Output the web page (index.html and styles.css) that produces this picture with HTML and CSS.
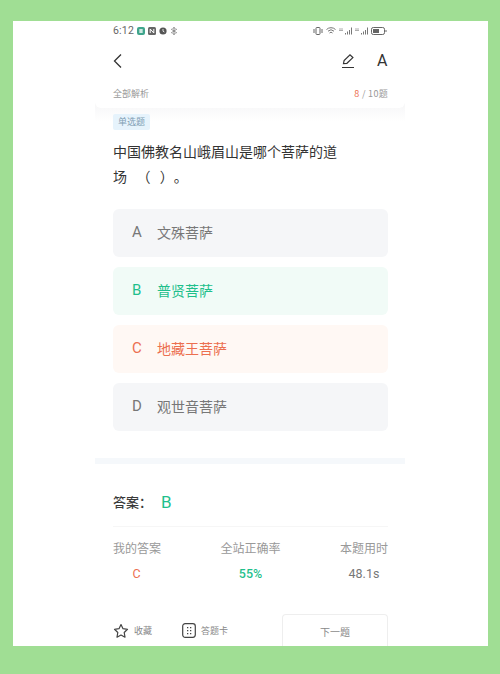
FILE: index.html
```html
<!DOCTYPE html>
<html lang="zh-CN">
<head>
<meta charset="utf-8">
<title>全部解析</title>
<link rel="stylesheet" href="styles.css">
</head>
<body>
<main class="sheet">
  <div class="phone">
    <header class="top-card">
      <div class="status">
        <div class="status-left">
          <span class="time">6:12</span>
          <svg viewBox="0 0 8 8" width="8" height="8"><rect width="8" height="8" rx="2" fill="#3fa58c"/><path d="M2 3h4M2 5h4M4 2v4" stroke="#fff" stroke-width="1"/></svg>
          <svg viewBox="0 0 8 8" width="8" height="8"><rect width="8" height="8" rx="1.5" fill="#666"/><path d="M2.200 6V2l3.600 4V2" stroke="#fff" stroke-width="1" fill="none"/></svg>
          <svg viewBox="0 0 8 8" width="8" height="8"><circle cx="4" cy="4" r="3.600" fill="#555"/><path d="M4 2v2.200l1.400 .8" stroke="#fff" stroke-width=".8" fill="none"/></svg>
          <svg viewBox="0 0 8 8" width="8" height="8"><path d="M1 2l6 4M1 6l6-4M4 .5v7M2.500 1.500L4 .5l1.500 1M2.500 6.500L4 7.500l1.500-1" stroke="#777" stroke-width=".8" fill="none"/></svg>
        </div>
        <div class="status-right">
          <svg viewBox="0 0 10 8" width="10" height="8"><rect x="3" y=".5" width="4" height="7" rx=".8" fill="none" stroke="#666"/><path d="M1 2v4M9 2v4" stroke="#666"/></svg>
          <svg viewBox="0 0 10 8" width="10" height="8"><path d="M.5 2.500a6.500 6.500 0 0 1 9 0M2 4.200a4.300 4.300 0 0 1 6 0M3.500 6a2 2 0 0 1 3 0" stroke="#777" fill="none"/></svg>
          <svg viewBox="0 0 13 8" width="13" height="8"><path d="M6 7.500h1V6H6zM8 7.500h1V4.500H8zM10 7.500h1V3h-1zM12 7.500h1V.5h-1z" fill="#777"/><path d="M0 2h4M0 3.500h4" stroke="#999" stroke-width=".8"/></svg>
          <svg viewBox="0 0 13 8" width="13" height="8"><path d="M6 7.500h1V6H6zM8 7.500h1V4.500H8zM10 7.500h1V3h-1zM12 7.500h1V.5h-1z" fill="#777"/><path d="M0 2h4M0 3.500h4" stroke="#999" stroke-width=".8"/></svg>
          <svg viewBox="0 0 16 8" width="16" height="8"><rect x=".5" y=".5" width="13" height="7" rx="1.800" fill="none" stroke="#666"/><rect x="2" y="2" width="6" height="4" fill="#666"/><path d="M15 3v2" stroke="#666"/></svg>
        </div>
      </div>
      <nav class="toolbar">
        <svg viewBox="0 0 10 16" width="10" height="16"><path d="M8 1.500L1.500 8 8 14.500" fill="none" stroke="#333" stroke-width="1.300"/></svg>
        <div class="tools">
          <svg viewBox="0 0 14 16" width="14" height="16"><path d="M2.500 10.500l.6-3L9 1.800l2.900 2.800-6 5.700zM1 14.500h12" fill="none" stroke="#333" stroke-width="1.200"/></svg>
          <span class="font-a">A</span>
        </div>
      </nav>
      <div class="progress">
        <span>全部解析</span>
        <span class="count"><b class="current">8</b> / 10题</span>
      </div>
    </header>

    <section class="question">
      <span class="tag">单选题</span>
      <h1 class="stem">中国佛教名山峨眉山是哪个菩萨的道场&nbsp;&nbsp;&nbsp;（&nbsp;&nbsp;&nbsp;）。</h1>
      <ul class="options">
        <li class="option"><span class="letter">A</span>文殊菩萨</li>
        <li class="option right"><span class="letter">B</span>普贤菩萨</li>
        <li class="option wrong"><span class="letter">C</span>地藏王菩萨</li>
        <li class="option"><span class="letter">D</span>观世音菩萨</li>
      </ul>
    </section>

    <div class="divider"></div>

    <section class="answer">
      <div class="answer-line">答案：<span class="answer-key">B</span></div>
      <div class="stats">
        <div class="stat"><span class="stat-label">我的答案</span><span class="stat-value bad">C</span></div>
        <div class="stat"><span class="stat-label">全站正确率</span><span class="stat-value good">55%</span></div>
        <div class="stat"><span class="stat-label">本题用时</span><span class="stat-value">48.1s</span></div>
      </div>
    </section>

    <footer class="bottom">
      <div class="action">
        <svg viewBox="0 0 16 16" width="16" height="16"><path d="M8 1.500l2 4.200 4.500.6-3.300 3.200.8 4.700L8 12l-4 2.200.8-4.700L1.500 6.300 6 5.700z" fill="none" stroke="#444" stroke-width="1.200" stroke-linejoin="round"/></svg>
        <span>收藏</span>
      </div>
      <div class="action action-card">
        <svg viewBox="0 0 14 15" width="14" height="15"><rect x=".7" y=".7" width="12.600" height="13.600" rx="2.500" fill="none" stroke="#444" stroke-width="1.200"/><path d="M5 4h1.300v1.300H5zM8 4h1.300v1.300H8zM5 7h1.300v1.300H5zM8 7h1.300v1.300H8zM8 10h1.300v1.300H8zM5 10h1.300v1.300H5z" fill="#444"/></svg>
        <span>答题卡</span>
      </div>
      <div class="next">下一题</div>
    </footer>
  </div>
</main>
</body>
</html>
```

FILE: styles.css
```css
* { box-sizing: border-box; }
html, body { margin: 0; padding: 0; }
body {
  width: 500px;
  height: 674px;
  overflow: hidden;
  background: #a0de94;
  font-family: "Noto Sans CJK SC", "Noto Sans", sans-serif;
  padding: 21px 12px 28px 13px;
}
.sheet {
  height: 625px;
  background: #fff;
  overflow: hidden;
}
.phone {
  width: 310px;
  margin-left: 82px;
}
.top-card {
  height: 87px;
  padding: 0 17px 0 18px;
  border-radius: 0 0 6px 6px;
  background: #fff;
  position: relative;
}
.status {
  height: 19px;
  display: flex;
  justify-content: space-between;
  align-items: center;
}
.status-left, .status-right { display: flex; align-items: center; gap: 3px; }
.status-right { margin-right: 1px; }
.time { font: 10.500px "Roboto", sans-serif; color: #666; letter-spacing: .2px; }
.toolbar {
  height: 27px;
  margin-top: 7px;
  display: flex;
  justify-content: space-between;
  align-items: center;
}
.tools { display: flex; align-items: center; gap: 22px; }
.font-a { font: 16px "Roboto", sans-serif; color: #333; width: 11px; }
.progress {
  margin-top: 13px;
  display: flex;
  justify-content: space-between;
  font-size: 9px;
  line-height: 13px;
  color: #999;
}
.count { letter-spacing: .3px; }
.current { color: #ec6f50; font-weight: 400; }

.question {
  margin-top: -6px;
  padding: 12px 17px 0 18px;
  background: linear-gradient(#f6f6f7, #fff 20px);
}
.tag {
  display: block;
  width: 37px;
  height: 16px;
  background: #e6f3fc;
  border-radius: 2px;
  color: #7f9db3;
  font-size: 9px;
  line-height: 16px;
  text-align: center;
}
.stem {
  margin: 9px 0 0;
  width: 228px;
  font-size: 14px;
  line-height: 25px;
  font-weight: 400;
  color: #333;
  text-spacing-trim: space-all;
}
.options {
  list-style: none;
  margin: 20px 0 0;
  padding: 0;
  display: flex;
  flex-direction: column;
  gap: 10px;
}
.option {
  height: 48px;
  border-radius: 6px;
  background: #f5f6f8;
  color: #777;
  font-size: 14px;
  display: flex;
  align-items: center;
  padding: 0 0 2px 19px;
}
.letter { width: 25px; font: 15px "Roboto", sans-serif; }
.right { background: #f1fbf7; color: #1fbf8c; }
.wrong { background: #fff8f4; color: #ec6f50; }

.divider {
  height: 6px;
  margin-top: 27px;
  background: #f5f8fb;
}
.answer { padding: 0 17px 0 18px; }
.answer-line {
  height: 63px;
  display: flex;
  align-items: center;
  padding-top: 13px;
  border-bottom: 1px solid #f6f6f6;
  font-size: 13px;
  font-weight: 500;
  color: #3a3a3a;
}
.answer-key { font: 400 17px "Roboto", sans-serif; color: #1fbf8c; margin-left: 9px; }
.stats {
  display: flex;
  justify-content: space-between;
  padding-top: 12px;
}
.stat { display: flex; flex-direction: column; align-items: center; gap: 8px; }
.stat-label { font-size: 12px; line-height: 18px; color: #999; }
.stat-value { font: 12.500px/18px "Roboto", sans-serif; color: #777; }
.bad { color: #ec6f50; margin-right: 1px; }
.good { color: #1fbf8c; font-weight: 500; }

.bottom {
  display: flex;
  align-items: center;
  height: 33px;
  margin-top: 31px;
  padding-left: 18px;
}
.action { display: flex; align-items: center; gap: 5px; font-size: 9px; color: #888; }
.action-card { margin-left: 30px; }
.next {
  margin-left: auto;
  margin-right: 17px;
  width: 106px;
  height: 33px;
  border: 1px solid #eeeeee;
  border-bottom: 0;
  border-radius: 4px 4px 0 0;
  font-size: 10px;
  line-height: 33px;
  text-align: center;
  color: #888;
}
```
